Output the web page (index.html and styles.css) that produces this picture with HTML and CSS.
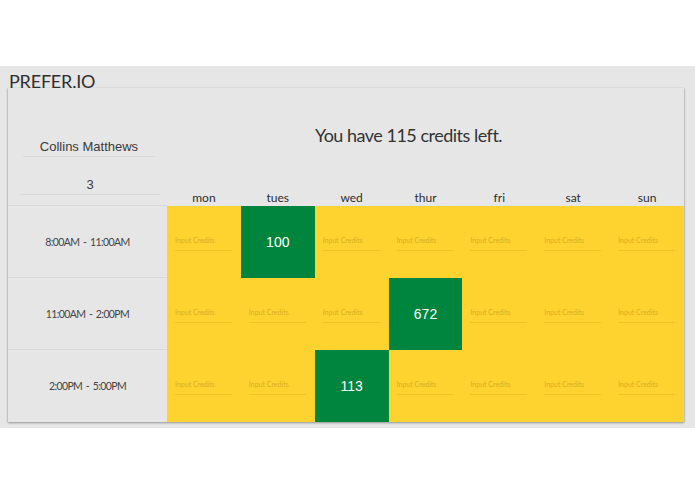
FILE: index.html
```html
<!DOCTYPE html>
<html>
<head>
<meta charset="utf-8">
<link rel="stylesheet" href="styles.css">
</head>
<body>
<div class="band">
  <div class="brand">PREFER.IO</div>
  <div class="card">
    <div class="user">
      <div class="name">Collins Matthews</div>
      <div class="count">3</div>
    </div>
    <div class="head">
      <div class="title">You have 115 credits left.</div>
      <div class="days">
        <span>mon</span><span>tues</span><span>wed</span><span>thur</span><span>fri</span><span>sat</span><span>sun</span>
      </div>
    </div>

    <div class="slot">8:00AM - 11:00AM</div>
    <div class="cell"><input class="credit" placeholder="Input Credits"></div>
    <div class="cell picked">100</div>
    <div class="cell"><input class="credit" placeholder="Input Credits"></div>
    <div class="cell"><input class="credit" placeholder="Input Credits"></div>
    <div class="cell"><input class="credit" placeholder="Input Credits"></div>
    <div class="cell"><input class="credit" placeholder="Input Credits"></div>
    <div class="cell"><input class="credit" placeholder="Input Credits"></div>

    <div class="slot">11:00AM - 2:00PM</div>
    <div class="cell"><input class="credit" placeholder="Input Credits"></div>
    <div class="cell"><input class="credit" placeholder="Input Credits"></div>
    <div class="cell"><input class="credit" placeholder="Input Credits"></div>
    <div class="cell picked">672</div>
    <div class="cell"><input class="credit" placeholder="Input Credits"></div>
    <div class="cell"><input class="credit" placeholder="Input Credits"></div>
    <div class="cell"><input class="credit" placeholder="Input Credits"></div>

    <div class="slot last">2:00PM - 5:00PM</div>
    <div class="cell"><input class="credit" placeholder="Input Credits"></div>
    <div class="cell"><input class="credit" placeholder="Input Credits"></div>
    <div class="cell picked">113</div>
    <div class="cell"><input class="credit" placeholder="Input Credits"></div>
    <div class="cell"><input class="credit" placeholder="Input Credits"></div>
    <div class="cell"><input class="credit" placeholder="Input Credits"></div>
    <div class="cell"><input class="credit" placeholder="Input Credits"></div>
  </div>
</div>
</body>
</html>
```

FILE: styles.css
```css
html, body {
  margin: 0;
  padding: 0;
  background: #ffffff;
}
body {
  font-family: Lato, "Open Sans", sans-serif;
  color: #333;
}
.band {
  margin-top: 66px;
  height: 362px;
  background: #e6e6e6;
  padding: 0 11px 0 8px;
  box-sizing: border-box;
}
.brand {
  font-size: 18px;
  line-height: 22px;
  height: 22px;
  padding: 4px 0 0 1px;
  margin-bottom: -4px;
  letter-spacing: -0.2px;
  color: #2f2f2f;
  position: relative;
  z-index: 1;
}
.card {
  height: 334px;
  background: #e6e6e6;
  box-shadow: 0 1px 2px rgba(0,0,0,0.35), 1px 0 1px rgba(0,0,0,0.06), -1px 0 1px rgba(0,0,0,0.05);
  display: grid;
  grid-template-columns: 159px repeat(7, 1fr);
  grid-template-rows: 118px repeat(3, 72px);
}
.user {
  padding-top: 50px;
  border-bottom: 1px solid #d8d8d8;
  font-family: "Liberation Sans", Arial, sans-serif;
  color: #3a3a3a;
  box-sizing: border-box;
}
.name {
  font-size: 13px;
  line-height: 18px;
  text-align: center;
  margin: 0 12px 0 15px;
  border-bottom: 1px solid #d9d9d9;
}
.count {
  font-size: 13px;
  line-height: 18px;
  text-align: center;
  margin: 19px 7px 0 12px;
  border-bottom: 1px solid #d9d9d9;
}
.head {
  grid-column: 2 / 9;
  display: flex;
  flex-direction: column;
}
.title {
  padding: 35px 34px 0 0;
  font-size: 18px;
  line-height: 24px;
  letter-spacing: -0.5px;
  text-align: center;
  color: #333;
}
.days {
  margin-top: auto;
  display: grid;
  grid-template-columns: repeat(7, 1fr);
  font-size: 12px;
  line-height: 16px;
  color: #2e2e2e;
}
.days span {
  text-align: center;
}
.slot {
  display: flex;
  align-items: center;
  justify-content: center;
  font-size: 10.5px;
  letter-spacing: -0.6px;
  word-spacing: 1.5px;
  color: #444;
  border-bottom: 1px solid #d8d8d8;
}
.slot.last {
  border-bottom: none;
}
.cell {
  background: #fed22f;
  padding: 23px 9px 0 8px;
  box-sizing: border-box;
}
.credit {
  display: block;
  width: 100%;
  height: 22px;
  box-sizing: border-box;
  padding: 0;
  border: none;
  border-bottom: 1px solid rgba(180,140,0,0.22);
  background: transparent;
  font-family: Lato, sans-serif;
  font-size: 7px;
  outline: none;
}
.credit::placeholder {
  color: #d9ad25;
}
.cell.picked {
  background: #00853e;
  color: #fff;
  padding: 0;
  display: flex;
  align-items: center;
  justify-content: center;
  font-family: "Liberation Sans", Arial, sans-serif;
  font-size: 14px;
}
```
